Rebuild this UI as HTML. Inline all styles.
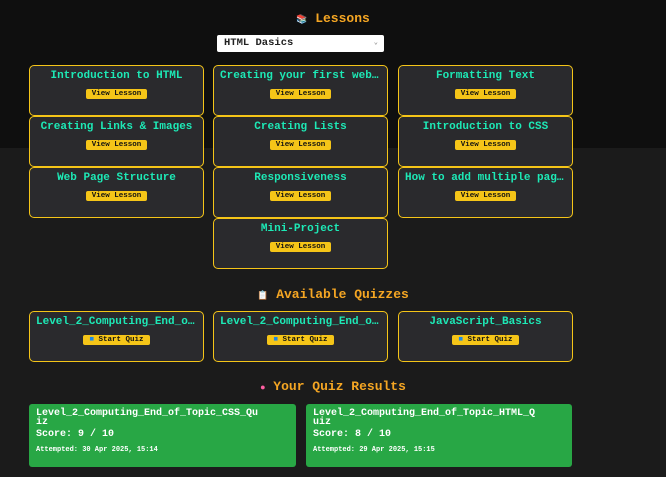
<!DOCTYPE html>
<html><head><style>
*{margin:0;padding:0;box-sizing:border-box}
body{width:666px;height:477px;overflow:hidden;background:#1b1b1b;font-family:"Liberation Mono",monospace;font-weight:bold;position:relative}
.top{position:absolute;left:0;top:0;width:666px;height:148px;background:#0f0f0f}
.h{position:absolute;left:0;width:666px;text-align:center;color:#f5a623;font-size:13px}
.card{position:absolute;width:175px;height:51px;background:#2a2a2d;border:1.5px solid #f5c518;border-radius:5px;text-align:center}
.t{color:#1de9b6;font-size:11px;margin-top:4px;white-space:nowrap;overflow:hidden;text-overflow:ellipsis;padding:0 6px}
.b{display:inline-block;background:#f5c518;color:#111;font-size:7.5px;padding:1px 6px;border-radius:2px;margin-top:4px}
.sel{position:absolute;left:217px;top:35px;width:167px;height:17px;background:#fff;border-radius:2px;font-size:10.5px;color:#222;padding:2px 7px}
.res{position:absolute;top:404px;height:63px;background:#28a745;border-radius:3px;color:#fff;padding:5px 7px}
.res .a{font-size:10px;line-height:9px}
.res .s{font-size:10px;margin-top:2px}
.res .d{font-size:7px;margin-top:6px}
</style></head><body>
<div class="top"></div>
<div class="h" style="top:11px"><span style="font-size:9px">📚</span> Lessons</div>
<div class="sel">HTML Dasics<span style="position:absolute;right:6px;top:3px;font-size:7px;color:#888">⌄</span></div>

<div class="card" style="left:29px;top:65px"><div class="t">Introduction to HTML</div><span class="b">View Lesson</span></div>
<div class="card" style="left:213px;top:65px"><div class="t">Creating your first web page</div><span class="b">View Lesson</span></div>
<div class="card" style="left:398px;top:65px"><div class="t">Formatting Text</div><span class="b">View Lesson</span></div>
<div class="card" style="left:29px;top:116px"><div class="t">Creating Links &amp; Images</div><span class="b">View Lesson</span></div>
<div class="card" style="left:213px;top:116px"><div class="t">Creating Lists</div><span class="b">View Lesson</span></div>
<div class="card" style="left:398px;top:116px"><div class="t">Introduction to CSS</div><span class="b">View Lesson</span></div>
<div class="card" style="left:29px;top:167px"><div class="t">Web Page Structure</div><span class="b">View Lesson</span></div>
<div class="card" style="left:213px;top:167px"><div class="t">Responsiveness</div><span class="b">View Lesson</span></div>
<div class="card" style="left:398px;top:167px"><div class="t">How to add multiple pages</div><span class="b">View Lesson</span></div>
<div class="card" style="left:213px;top:218px"><div class="t">Mini-Project</div><span class="b">View Lesson</span></div>

<div class="h" style="top:287px"><span style="font-size:9px">📋</span> Available Quizzes</div>
<div class="card" style="left:29px;top:311px"><div class="t">Level_2_Computing_End_of_Topic</div><span class="b"><span style="color:#1e88e5">■</span> Start Quiz</span></div>
<div class="card" style="left:213px;top:311px"><div class="t">Level_2_Computing_End_of_Topic</div><span class="b"><span style="color:#1e88e5">■</span> Start Quiz</span></div>
<div class="card" style="left:398px;top:311px"><div class="t">JavaScript_Basics</div><span class="b"><span style="color:#1e88e5">■</span> Start Quiz</span></div>

<div class="h" style="top:379px"><span style="font-size:9px;color:#ff5fa2">●</span> Your Quiz Results</div>
<div class="res" style="left:29px;width:267px"><div class="a">Level_2_Computing_End_of_Topic_CSS_Qu<br>iz</div><div class="s">Score: 9 / 10</div><div class="d">Attempted: 30 Apr 2025, 15:14</div></div>
<div class="res" style="left:306px;width:266px"><div class="a">Level_2_Computing_End_of_Topic_HTML_Q<br>uiz</div><div class="s">Score: 8 / 10</div><div class="d">Attempted: 29 Apr 2025, 15:15</div></div>
</body></html>
